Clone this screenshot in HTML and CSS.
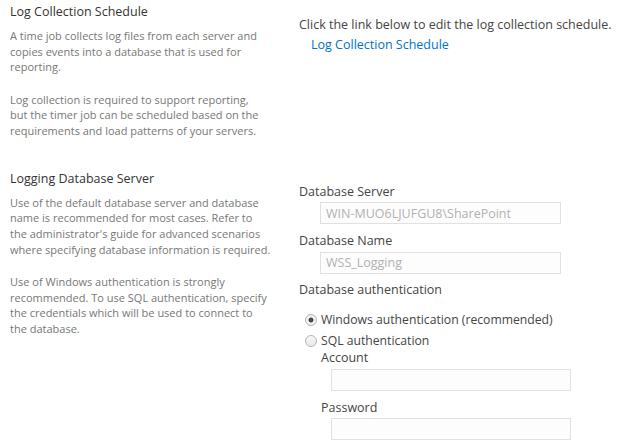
FILE: index.html
```html
<!DOCTYPE html>
<html>
<head>
  <title>Usage and Health Data Collection</title>
  <meta http-equiv="content-type" content="text/html; charset=utf-8" />
  <link rel="stylesheet" href="styles.css">
</head>
<body>
  <div class="section first">
    <div class="area">
      <h3 class="area-title">Log Collection Schedule</h3>
      <p class="area-desc">A time job collects log files from each server and<br>copies events into a database that is used for<br>reporting.</p>
      <p class="area-desc">Log collection is required to support reporting,<br>but the timer job can be scheduled based on the<br>requirements and load patterns of your servers.</p>
    </div>
    <div class="body">
      <div class="field-text">Click the link below to edit the log collection schedule.</div>
      <a class="link" href="#">Log Collection Schedule</a>
    </div>
  </div>

  <div class="section">
    <div class="area">
      <h3 class="area-title">Logging Database Server</h3>
      <p class="area-desc">Use of the default database server and database<br>name is recommended for most cases. Refer to<br>the administrator's guide for advanced scenarios<br>where specifying database information is required.</p>
      <p class="area-desc">Use of Windows authentication is strongly<br>recommended. To use SQL authentication, specify<br>the credentials which will be used to connect to<br>the database.</p>
    </div>
    <div class="body">
      <div class="label">Database Server</div>
      <input type="text" class="textbox" id="dbServer" value="WIN-MUO6LJUFGU8\SharePoint" disabled>
      <div class="label">Database Name</div>
      <input type="text" class="textbox" id="dbName" value="WSS_Logging" disabled>
      <div class="label auth">Database authentication</div>
      <label class="option first-option"><input type="radio" class="radio" name="auth" checked> Windows authentication (recommended)</label>
      <label class="option"><input type="radio" class="radio" name="auth"> SQL authentication</label>
      <div class="sql">
        <div class="label sub">Account</div>
        <input type="text" class="textbox" id="account">
        <div class="label pass">Password</div>
        <input type="password" class="textbox" id="password">
      </div>
    </div>
  </div>
</body>
</html>
```

FILE: styles.css
```css
body {
  margin: 0;
  font-family: "Open Sans", sans-serif;
  font-size: 12.5px;
  line-height: 15.7px;
  color: #444;
  background: #fff;
}
.section {
  display: grid;
  grid-template-columns: 289px 1fr;
  padding-left: 10px;
  margin-top: 32px;
}
.section.first {
  margin-top: 4px;
}
.area-title {
  margin: 0;
  font-size: 12.5px;
  font-weight: normal;
  color: #333;
}
.area-desc {
  margin: 16.5px 0 0;
  font-size: 11px;
  color: #777;
  white-space: nowrap;
}
.area-title + .area-desc {
  margin-top: 8.3px;
}
.body {
  padding-top: 12.8px;
}
.link {
  display: block;
  margin: 4.3px 0 0 12px;
  color: #0072c6;
  text-decoration: none;
}
.label {
  margin-top: 9px;
}
.body > .label:first-child {
  margin-top: 0;
}
.label.auth {
  margin-top: 8.5px;
}
.textbox {
  display: block;
  box-sizing: border-box;
  width: 241px;
  height: 22px;
  margin: 3px 0 0 21px;
  padding: 0 5px;
  border: 1px solid #e1e1e1;
  background: #fdfdfd;
  font-family: "Open Sans", sans-serif;
  font-size: 12.5px;
  color: #444;
  outline: none;
}
.textbox:disabled {
  color: #b1b1b1;
  -webkit-text-fill-color: #b1b1b1;
}
.option {
  display: flex;
  align-items: center;
  margin-top: 6px;
  font-size: 12.2px;
}
.option.first-option {
  margin-top: 13.6px;
}
.radio {
  appearance: none;
  -webkit-appearance: none;
  box-sizing: border-box;
  width: 12px;
  height: 12px;
  margin: 0 4px 0 6px;
  border: 1px solid #b5b5b5;
  border-radius: 50%;
  background: linear-gradient(#f7f7f7, #e8e8e8);
}
.radio:checked {
  background: radial-gradient(circle, #4a4a4a 0, #4a4a4a 2.2px, #f2f2f2 2.8px);
}
.sql {
  margin-left: 22px;
}
.sql .label.sub {
  margin-top: 1.3px;
}
.sql .label.pass {
  margin-top: 8.5px;
}
.sql .textbox {
  width: 240px;
  margin-left: 10px;
}
```
